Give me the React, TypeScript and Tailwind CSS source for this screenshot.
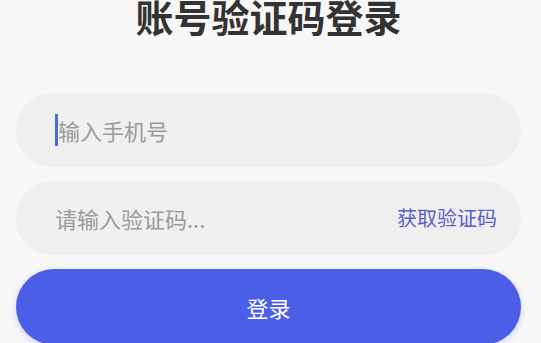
export default function App() {
  return (
    <div
      className="min-h-screen overflow-hidden bg-[#f7f7f7] pl-4 pr-5"
      style={{ fontFamily: '"Noto Sans CJK SC", "Noto Sans", sans-serif' }}
    >
      {/* Title, partially scrolled out of view */}
      <h1 className="-mt-[6px] text-center text-[38px] font-bold leading-[44px] text-[#333333]">
        账号验证码登录
      </h1>

      <div className="mt-[55px] flex flex-col gap-[14px]">
        {/* Phone */}
        <div className="flex h-[74px] items-center rounded-full bg-[#efefef] pl-[39px] pr-6">
          <span className="h-[32px] w-[3px] bg-[#3f6fd8]" />
          <span className="text-[22px] text-[#9a9a9a]">输入手机号</span>
        </div>

        {/* Code */}
        <div className="flex h-[74px] items-center justify-between rounded-full bg-[#efefef] pl-[39px] pr-[24px]">
          <span className="text-[22px] text-[#9a9a9a]">请输入验证码...</span>
          <span className="text-[20px] text-[#5a5ec6]">获取验证码</span>
        </div>

        {/* Submit */}
        <button className="flex h-[76px] items-center justify-center rounded-full bg-[#4a5ee8] text-[22px] text-white shadow-[0_2px_6px_rgba(74,94,232,0.25)]">
          登录
        </button>
      </div>
    </div>
  );
}
